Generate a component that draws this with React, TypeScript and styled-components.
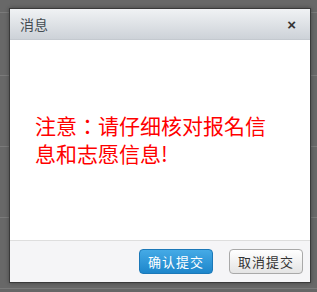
import React from 'react';
import styled, { createGlobalStyle } from 'styled-components';

const GlobalStyle = createGlobalStyle`
  html, body {
    margin: 0;
    padding: 0;
    width: 317px;
    height: 292px;
    overflow: hidden;
    background: #666;
    font-family: "Liberation Sans", "Noto Sans CJK SC", sans-serif;
  }
`;

const Page = styled.div`
  position: relative;
  width: 317px;
  height: 292px;
  background: #666;
`;

const Backdrop = styled.div`
  display: flex;
  flex-direction: column;
  height: 100%;
`;

const BgRow = styled.div<{ $h: number }>`
  height: ${p => p.$h}px;
  border-bottom: 1px solid #7a7a7a;
  background: #686868;
`;

const Dialog = styled.div`
  position: absolute;
  left: 9px;
  top: 8px;
  width: 300px;
  height: 273px;
  display: flex;
  flex-direction: column;
  background: #fff;
  border: 1px solid #3a3a3a;
  box-shadow: 0 0 4px rgba(0, 0, 0, 0.35);
`;

const Header = styled.div`
  height: 30px;
  display: flex;
  align-items: center;
  justify-content: space-between;
  padding: 0 10px 0 10px;
  background: linear-gradient(to bottom, #f0f2f4, #cdd2d8);
  border-bottom: 1px solid #c4c9cf;
`;

const Title = styled.span`
  font-size: 14px;
  color: #444c52;
`;

const Close = styled.span`
  font-size: 15px;
  font-weight: bold;
  color: #333;
  margin-right: 4px;
  line-height: 1;
`;

const Body = styled.div`
  flex: 1;
  display: flex;
  align-items: center;
  padding: 0 0 2px 25px;
`;

// TC face keeps the full-width colon centred, as in the reference
const Notice = styled.p`
  margin: 0;
  width: 240px;
  color: #f00;
  font-family: "Noto Sans CJK TC", "Noto Sans CJK SC", sans-serif;
  font-size: 21px;
  line-height: 28px;
`;

const Footer = styled.div`
  height: 41px;
  display: flex;
  align-items: center;
  justify-content: flex-end;
  gap: 16px;
  padding-right: 7px;
  background: #f5f5f7;
  border-top: 1px solid #dedede;
`;

const Button = styled.button<{ $primary?: boolean }>`
  width: 74px;
  height: 25px;
  padding: 0;
  border-radius: 4px;
  font-family: "Noto Sans CJK SC", sans-serif;
  font-size: 13px;
  letter-spacing: 1px;
  cursor: pointer;
  color: ${p => (p.$primary ? '#fff' : '#333')};
  border: 1px solid ${p => (p.$primary ? '#1b78b8' : '#a9a9a9')};
  background: ${p =>
    p.$primary
      ? 'linear-gradient(to bottom, #45aae6, #1d86cb)'
      : 'linear-gradient(to bottom, #ffffff, #e4e4e4)'};
`;

export default function App() {
  return (
    <Page>
      <GlobalStyle />
      <Backdrop>
        <BgRow $h={12} />
        <BgRow $h={62} />
        <BgRow $h={70} />
        <BgRow $h={70} />
        <BgRow $h={70} />
      </Backdrop>
      <Dialog>
        <Header>
          <Title>消息</Title>
          <Close>×</Close>
        </Header>
        <Body>
          <Notice>注意：请仔细核对报名信息和志愿信息!</Notice>
        </Body>
        <Footer>
          <Button $primary>确认提交</Button>
          <Button>取消提交</Button>
        </Footer>
      </Dialog>
    </Page>
  );
}
